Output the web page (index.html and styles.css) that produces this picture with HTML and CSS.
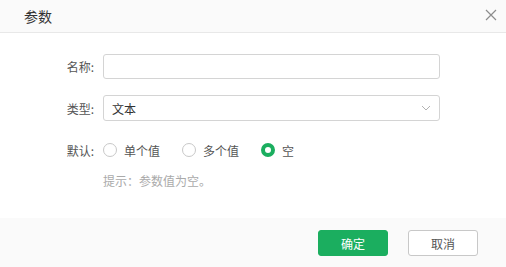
FILE: index.html
```html
<!DOCTYPE html>
<html lang="zh-CN">
<head>
  <meta charset="UTF-8" />
  <title>参数</title>
  <link rel="stylesheet" href="styles.css">
</head>
<body>
  <div class="dialog">
    <div class="dialog-header">
      <span class="dialog-title">参数</span>
      <span class="close-btn">
        <svg width="12" height="12" viewBox="0 0 12 12">
          <path d="M1 1 L11 11 M11 1 L1 11" stroke="#8c8c8c" stroke-width="1.2" fill="none"/>
        </svg>
      </span>
    </div>

    <div class="dialog-body">
      <div class="form-row row-name">
        <label class="form-label">名称:</label>
        <input class="form-input" type="text">
      </div>

      <div class="form-row row-type">
        <label class="form-label">类型:</label>
        <div class="form-select">
          <span>文本</span>
          <svg width="10" height="6" viewBox="0 0 10 6">
            <path d="M1 1 L5 5 L9 1" stroke="#b3b3b3" stroke-width="1" fill="none"/>
          </svg>
        </div>
      </div>

      <div class="form-row row-default">
        <label class="form-label">默认:</label>
        <div class="radio-group">
          <span class="radio"><i class="radio-dot"></i>单个值</span>
          <span class="radio"><i class="radio-dot"></i>多个值</span>
          <span class="radio checked"><i class="radio-dot"></i>空</span>
        </div>
      </div>

      <div class="hint">提示：参数值为空。</div>
    </div>

    <div class="dialog-footer">
      <button class="btn btn-primary">确定</button>
      <button class="btn btn-default">取消</button>
    </div>
  </div>
</body>
</html>
```

FILE: styles.css
```css
* {
  box-sizing: border-box;
}
body {
  margin: 0;
  font-family: "Noto Sans CJK SC", "Liberation Sans", sans-serif;
  font-size: 12px;
  color: #555;
  background: #fff;
}
.dialog {
  width: 506px;
  height: 267px;
  display: flex;
  flex-direction: column;
}
.dialog-header {
  height: 33px;
  background: #fafafa;
  border-bottom: 1px solid #e8e8e8;
  display: flex;
  align-items: center;
  justify-content: space-between;
  padding: 0 9px 0 24px;
}
.dialog-title {
  font-size: 14px;
  color: #333;
}
.close-btn {
  display: flex;
  width: 12px;
  height: 12px;
  margin-top: -2px;
}
.dialog-body {
  flex: 1;
  padding-top: 21px;
}
.form-row {
  display: flex;
  align-items: center;
}
.form-label {
  width: 95px;
  text-align: right;
  padding-right: 1px;
  margin-right: 8px;
  color: #555;
}
.form-input, .form-select {
  width: 337px;
  height: 25px;
  border: 1px solid #d4d4d4;
  border-radius: 3px;
  background: #fff;
}
.form-select {
  height: 26px;
  display: flex;
  align-items: center;
  justify-content: space-between;
  padding: 0 8px 0 8px;
  color: #333;
}
.row-type {
  margin-top: 16px;
}
.row-default {
  margin-top: 17px;
  height: 24px;
}
.radio-group {
  display: flex;
  align-items: center;
}
.radio {
  display: flex;
  align-items: center;
  margin-right: 22px;
  color: #555;
}
.radio-dot {
  width: 14px;
  height: 14px;
  border: 1px solid #c8c8c8;
  border-radius: 50%;
  margin-right: 7px;
  background: #fff;
}
.radio.checked .radio-dot {
  border: 4.5px solid #1bae5f;
}
.hint {
  margin: 10px 0 0 103px;
  color: #aaa;
  line-height: 18px;
}
.dialog-footer {
  height: 49px;
  background: #fafafa;
  display: flex;
  justify-content: flex-end;
  align-items: flex-start;
  padding: 12px 28px 0 0;
  gap: 20px;
}
.btn {
  width: 70px;
  height: 26px;
  border-radius: 3px;
  font-family: inherit;
  font-size: 12px;
  cursor: pointer;
}
.btn-primary {
  background: #1bae5f;
  border: 1px solid #1bae5f;
  color: #fff;
}
.btn-default {
  background: #fff;
  border: 1px solid #c8c8c8;
  color: #555;
}
```
